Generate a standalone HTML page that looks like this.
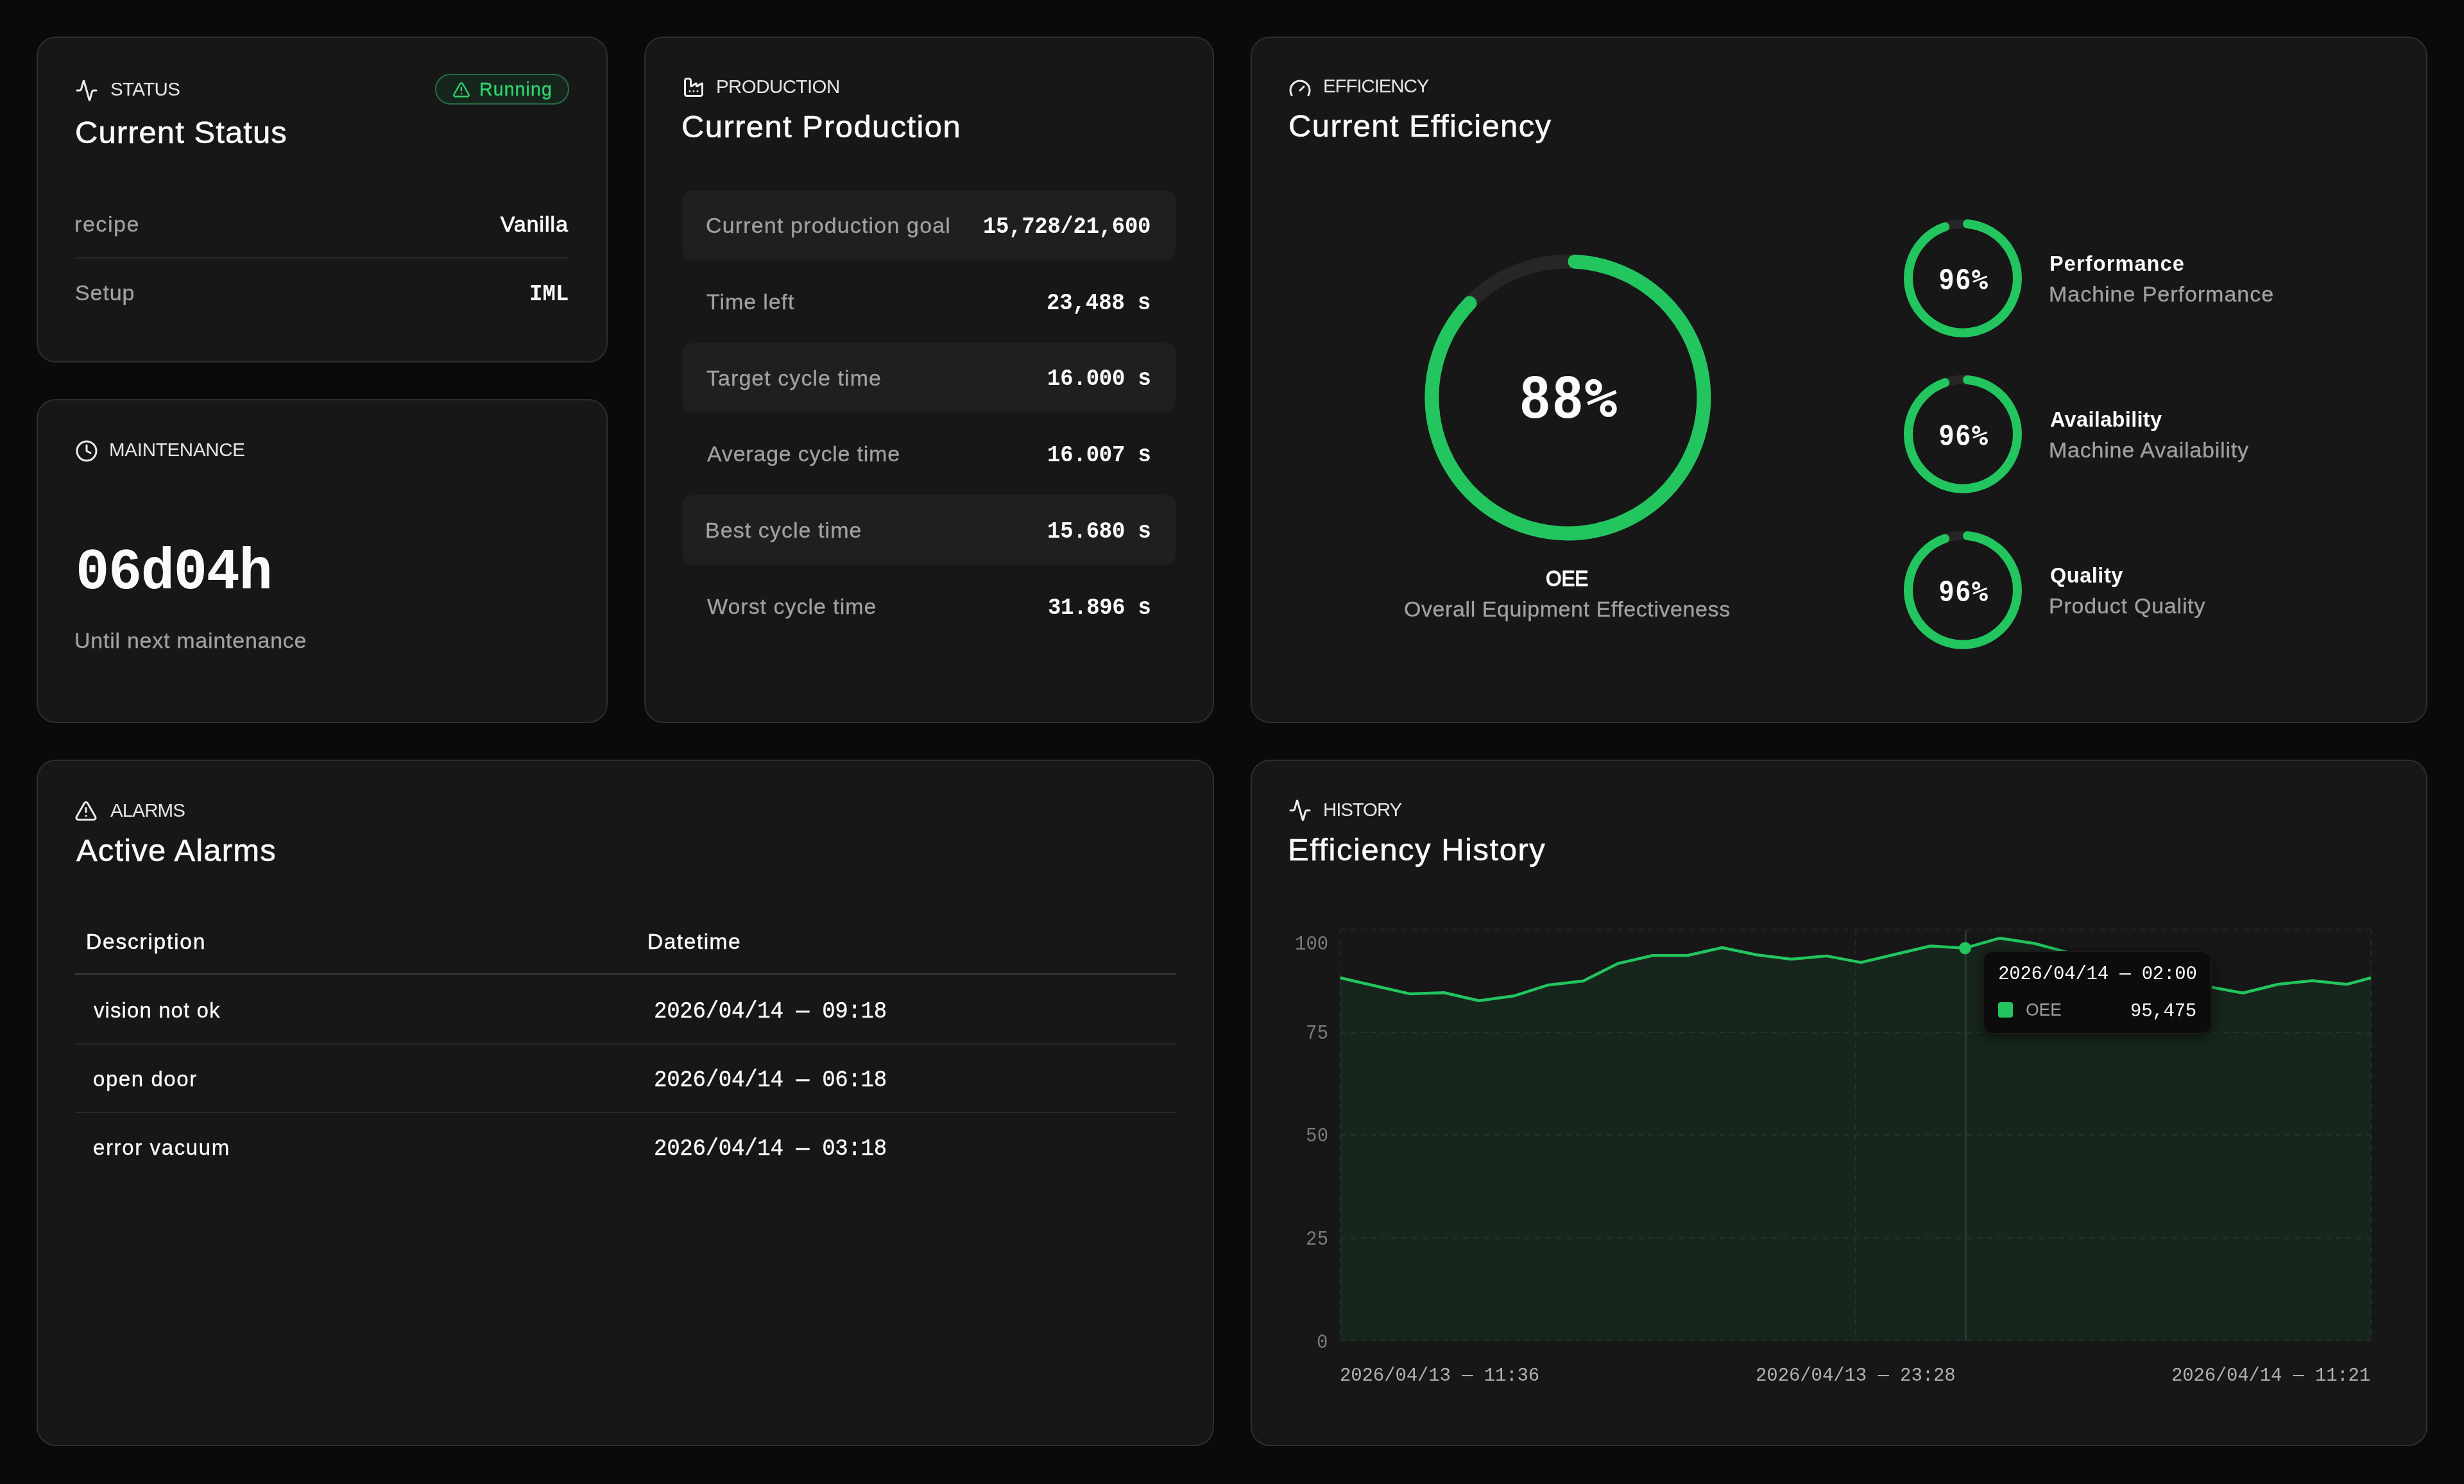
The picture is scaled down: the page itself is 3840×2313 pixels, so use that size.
<!DOCTYPE html><html><head><meta charset="utf-8"><title>Dashboard</title><style>
html,body{margin:0;padding:0;}body{width:3840px;height:2313px;background:#0a0a0a;position:relative;overflow:hidden;font-family:"Liberation Sans",sans-serif;}
.card{position:absolute;box-sizing:border-box;background:#171717;border:2px solid #2e2e2e;border-radius:30px;}
.t{position:absolute;white-space:nowrap;will-change:transform;}.ic{position:absolute;}.full{position:absolute;left:0;top:0;}
.rowbg{position:absolute;background:#1f1f1f;border-radius:14px;}.hr{position:absolute;}
@media (max-width:2600px){html{zoom:0.5;}}
</style></head><body>
<div class="card" style="left:57px;top:57px;width:890px;height:508px"></div>
<div class="card" style="left:57px;top:622px;width:890px;height:505px"></div>
<div class="card" style="left:1004px;top:57px;width:888px;height:1070px"></div>
<div class="card" style="left:1949px;top:57px;width:1834px;height:1070px"></div>
<div class="card" style="left:57px;top:1184px;width:1835px;height:1070px"></div>
<div class="card" style="left:1949px;top:1184px;width:1834px;height:1070px"></div>
<div class="hr" style="left:117px;top:401px;width:770px;height:2px;background:#292929"></div>
<div style="position:absolute;left:678px;top:115px;width:209px;height:48px;box-sizing:border-box;border:2px solid rgb(40,108,70);background:rgba(34,197,94,0.09);border-radius:24px"></div>
<svg class="ic" style="left:704.5px;top:125.5px" width="28" height="28" viewBox="0 0 24 24" fill="none" stroke="#2fd56f" stroke-width="2" stroke-linecap="round" stroke-linejoin="round"><path d="m21.73 18-8-14a2 2 0 0 0-3.48 0l-8 14A2 2 0 0 0 4 21h16a2 2 0 0 0 1.73-3"/><path d="M12 9v4"/><path d="M12 17h.01"/></svg>
<div class="rowbg" style="left:1064px;top:297.00px;width:768px;height:108.5px"></div>
<div class="rowbg" style="left:1064px;top:534.50px;width:768px;height:108.5px"></div>
<div class="rowbg" style="left:1064px;top:772.00px;width:768px;height:108.5px"></div>
<div class="hr" style="left:117px;top:1517px;width:1715px;height:3px;background:#353535"></div>
<div class="hr" style="left:117px;top:1626px;width:1715px;height:2px;background:#292929"></div>
<div class="hr" style="left:117px;top:1733px;width:1715px;height:2px;background:#292929"></div>
<svg class="ic" style="left:116.6px;top:122.5px" width="36" height="36" viewBox="0 0 24 24" fill="none" stroke="#ebebeb" stroke-width="2" stroke-linecap="round" stroke-linejoin="round"><path d="M22 12h-2.48a2 2 0 0 0-1.93 1.46l-2.35 8.36a.25.25 0 0 1-.48 0L9.24 2.18a.25.25 0 0 0-.48 0l-2.35 8.36A2 2 0 0 1 4.49 12H2"/></svg>
<svg class="ic" style="left:116.5px;top:684.5px" width="36" height="36" viewBox="0 0 24 24" fill="none" stroke="#ebebeb" stroke-width="2" stroke-linecap="round" stroke-linejoin="round"><circle cx="12" cy="12" r="10"/><polyline points="12 6 12 12 16 14"/></svg>
<svg class="ic" style="left:1063px;top:118px" width="36" height="36" viewBox="0 0 24 24" fill="none" stroke="#ebebeb" stroke-width="2" stroke-linecap="round" stroke-linejoin="round"><path d="M12 16h.01"/><path d="M16 16h.01"/><path d="M3 19a2 2 0 0 0 2 2h14a2 2 0 0 0 2-2V8.5a.5.5 0 0 0-.769-.422l-4.462 2.844A.5.5 0 0 1 15 10.5v-2a.5.5 0 0 0-.769-.422L9.77 10.922A.5.5 0 0 1 9 10.5V5a2 2 0 0 0-2-2H5a2 2 0 0 0-2 2z"/><path d="M8 16h.01"/></svg>
<svg class="ic" style="left:2007.7px;top:119.5px" width="36" height="36" viewBox="0 0 24 24" fill="none" stroke="#ebebeb" stroke-width="2" stroke-linecap="round" stroke-linejoin="round"><path d="m12 14 4-4"/><path d="M3.34 19a10 10 0 1 1 17.32 0"/></svg>
<svg class="ic" style="left:116.1px;top:1245.5px" width="36" height="36" viewBox="0 0 24 24" fill="none" stroke="#ebebeb" stroke-width="2" stroke-linecap="round" stroke-linejoin="round"><path d="m21.73 18-8-14a2 2 0 0 0-3.48 0l-8 14A2 2 0 0 0 4 21h16a2 2 0 0 0 1.73-3"/><path d="M12 9v4"/><path d="M12 17h.01"/></svg>
<svg class="ic" style="left:2007.8px;top:1245.3px" width="36" height="36" viewBox="0 0 24 24" fill="none" stroke="#ebebeb" stroke-width="2" stroke-linecap="round" stroke-linejoin="round"><path d="M22 12h-2.48a2 2 0 0 0-1.93 1.46l-2.35 8.36a.25.25 0 0 1-.48 0L9.24 2.18a.25.25 0 0 0-.48 0l-2.35 8.36A2 2 0 0 1 4.49 12H2"/></svg>
<svg class="full" width="3840" height="2313" viewBox="0 0 3840 2313"><circle cx="2443.4" cy="619.4" r="212" fill="none" stroke="#262626" stroke-width="22"/><path d="M2454.40 407.69 A212 212 0 1 1 2290.45 472.60" fill="none" stroke="#22c55e" stroke-width="22" stroke-linecap="round"/><circle cx="2483.6" cy="603.8" r="9.3" fill="none" stroke="#fafafa" stroke-width="7.6"/><circle cx="2506.6" cy="637.0" r="9.3" fill="none" stroke="#fafafa" stroke-width="7.6"/><line x1="2474.2" y1="629.0" x2="2518.6" y2="610.6" stroke="#fafafa" stroke-width="5.6"/><circle cx="3059" cy="433.7" r="85" fill="none" stroke="#262626" stroke-width="14"/><path d="M3066.00 348.99 A85 85 0 1 1 3031.15 353.39" fill="none" stroke="#22c55e" stroke-width="14" stroke-linecap="round"/><circle cx="3079.7" cy="426.9" r="4.6" fill="none" stroke="#fafafa" stroke-width="3.9"/><circle cx="3091.4" cy="444.3" r="4.6" fill="none" stroke="#fafafa" stroke-width="3.9"/><line x1="3074.8" y1="439.3" x2="3096.6" y2="430.9" stroke="#fafafa" stroke-width="2.8"/><circle cx="3059" cy="676.7" r="85" fill="none" stroke="#262626" stroke-width="14"/><path d="M3066.00 591.99 A85 85 0 1 1 3031.15 596.39" fill="none" stroke="#22c55e" stroke-width="14" stroke-linecap="round"/><circle cx="3079.7" cy="669.9" r="4.6" fill="none" stroke="#fafafa" stroke-width="3.9"/><circle cx="3091.4" cy="687.3" r="4.6" fill="none" stroke="#fafafa" stroke-width="3.9"/><line x1="3074.8" y1="682.3" x2="3096.6" y2="673.9" stroke="#fafafa" stroke-width="2.8"/><circle cx="3059" cy="919.7" r="85" fill="none" stroke="#262626" stroke-width="14"/><path d="M3066.00 834.99 A85 85 0 1 1 3031.15 839.39" fill="none" stroke="#22c55e" stroke-width="14" stroke-linecap="round"/><circle cx="3079.7" cy="912.9" r="4.6" fill="none" stroke="#fafafa" stroke-width="3.9"/><circle cx="3091.4" cy="930.3" r="4.6" fill="none" stroke="#fafafa" stroke-width="3.9"/><line x1="3074.8" y1="925.3" x2="3096.6" y2="916.9" stroke="#fafafa" stroke-width="2.8"/></svg>
<svg class="full" width="3840" height="2313" viewBox="0 0 3840 2313"><line x1="2088.5" y1="1448.7" x2="3695" y2="1448.7" stroke="#262626" stroke-width="2" stroke-dasharray="8 8"/><line x1="2088.5" y1="1608.9" x2="3695" y2="1608.9" stroke="#262626" stroke-width="2" stroke-dasharray="8 8"/><line x1="2088.5" y1="1769.2" x2="3695" y2="1769.2" stroke="#262626" stroke-width="2" stroke-dasharray="8 8"/><line x1="2088.5" y1="1929.4" x2="3695" y2="1929.4" stroke="#262626" stroke-width="2" stroke-dasharray="8 8"/><line x1="2088.5" y1="2089.7" x2="3695" y2="2089.7" stroke="#262626" stroke-width="2" stroke-dasharray="8 8"/><line x1="2088.5" y1="1448.7" x2="2088.5" y2="2089.7" stroke="#262626" stroke-width="2" stroke-dasharray="8 8"/><line x1="2891.75" y1="1448.7" x2="2891.75" y2="2089.7" stroke="#262626" stroke-width="2" stroke-dasharray="8 8"/><line x1="3695" y1="1448.7" x2="3695" y2="2089.7" stroke="#262626" stroke-width="2" stroke-dasharray="8 8"/><path d="M2088.5,2089.7 L2088.5,1524.0 L2142.6,1536.5 L2196.7,1548.9 L2250.8,1547.2 L2304.9,1559.8 L2359.1,1552.3 L2413.2,1535.2 L2467.3,1529.0 L2521.4,1501.8 L2575.5,1489.2 L2629.6,1489.2 L2683.7,1477.0 L2737.8,1488.2 L2791.9,1495.0 L2846.0,1489.9 L2900.2,1500.1 L2954.3,1487.3 L3008.4,1474.5 L3062.5,1477.7 L3116.6,1462.2 L3170.7,1470.5 L3224.8,1485.2 L3278.9,1506.4 L3333.0,1519.2 L3387.1,1528.8 L3441.2,1537.8 L3495.4,1547.8 L3549.5,1534.2 L3603.6,1528.4 L3657.7,1534.2 L3695.0,1524.0 L3695,2089.7 Z" fill="#22c55e" fill-opacity="0.09"/><line x1="3063.5" y1="1448.7" x2="3063.5" y2="2089.7" stroke="#3f3f3f" stroke-width="2"/><polyline points="2088.5,1524.0 2142.6,1536.5 2196.7,1548.9 2250.8,1547.2 2304.9,1559.8 2359.1,1552.3 2413.2,1535.2 2467.3,1529.0 2521.4,1501.8 2575.5,1489.2 2629.6,1489.2 2683.7,1477.0 2737.8,1488.2 2791.9,1495.0 2846.0,1489.9 2900.2,1500.1 2954.3,1487.3 3008.4,1474.5 3062.5,1477.7 3116.6,1462.2 3170.7,1470.5 3224.8,1485.2 3278.9,1506.4 3333.0,1519.2 3387.1,1528.8 3441.2,1537.8 3495.4,1547.8 3549.5,1534.2 3603.6,1528.4 3657.7,1534.2 3695.0,1524.0" fill="none" stroke="#22c55e" stroke-width="4.5" stroke-linejoin="round"/><circle cx="3062.5" cy="1477.7" r="9.5" fill="#22c55e"/></svg>
<div style="position:absolute;left:3089.5px;top:1481.5px;width:357px;height:130px;box-sizing:border-box;background:#0c0c0c;border:2px solid #1a1a1a;border-radius:16px;z-index:4;box-shadow:0 6px 20px rgba(0,0,0,0.55)"></div>
<div style="position:absolute;left:3113.7px;top:1562px;width:23.6px;height:23.5px;background:#22c55e;border-radius:4px;z-index:5"></div>
<div class="t" style="left:171.68px;top:124.23px;font-family:'Liberation Sans',sans-serif;font-weight:400;font-size:29.50px;line-height:29.50px;letter-spacing:-0.607px;color:#e5e5e5;">STATUS</div>
<div class="t" style="left:116.70px;top:181.92px;font-family:'Liberation Sans',sans-serif;font-weight:400;font-size:49.00px;line-height:49.00px;letter-spacing:1.070px;color:#fafafa;-webkit-text-stroke:0.6px #fafafa;">Current Status</div>
<div class="t" style="left:746.77px;top:124.79px;font-family:'Liberation Sans',sans-serif;font-weight:400;font-size:28.60px;line-height:28.60px;letter-spacing:1.053px;color:#2fd56f;-webkit-text-stroke:0.4px #2fd56f;">Running</div>
<div class="t" style="left:116.17px;top:332.22px;font-family:'Liberation Sans',sans-serif;font-weight:400;font-size:34.00px;line-height:34.00px;letter-spacing:1.560px;color:#a1a1a1;-webkit-text-stroke:0.3px #a1a1a1;">recipe</div>
<div class="t" style="left:780.00px;top:332.64px;font-family:'Liberation Sans',sans-serif;font-weight:400;font-size:33.50px;line-height:33.50px;letter-spacing:1.118px;color:#fafafa;-webkit-text-stroke:0.9px #fafafa;">Vanilla</div>
<div class="t" style="left:116.94px;top:439.22px;font-family:'Liberation Sans',sans-serif;font-weight:400;font-size:34.00px;line-height:34.00px;letter-spacing:0.897px;color:#a1a1a1;-webkit-text-stroke:0.3px #a1a1a1;">Setup</div>
<div class="t" style="left:824.88px;top:441.94px;font-family:'Liberation Mono',monospace;font-weight:700;font-size:34.00px;line-height:34.00px;letter-spacing:0.097px;color:#fafafa;transform:scaleY(1.0700);transform-origin:0 26.06px;">IML</div>
<div class="t" style="left:170.20px;top:686.03px;font-family:'Liberation Sans',sans-serif;font-weight:400;font-size:29.50px;line-height:29.50px;letter-spacing:-0.267px;color:#e5e5e5;">MAINTENANCE</div>
<div class="t" style="left:117.91px;top:850.20px;font-family:'Liberation Mono',monospace;font-weight:700;font-size:87.15px;line-height:87.15px;letter-spacing:-1.413px;color:#fafafa;transform:scaleY(1.0400);transform-origin:0 66.80px;">06d04h</div>
<div class="t" style="left:115.88px;top:980.72px;font-family:'Liberation Sans',sans-serif;font-weight:400;font-size:34.00px;line-height:34.00px;letter-spacing:0.745px;color:#a1a1a1;-webkit-text-stroke:0.3px #a1a1a1;">Until next maintenance</div>
<div class="t" style="left:1115.70px;top:120.03px;font-family:'Liberation Sans',sans-serif;font-weight:400;font-size:29.50px;line-height:29.50px;letter-spacing:-0.555px;color:#e5e5e5;">PRODUCTION</div>
<div class="t" style="left:1061.70px;top:172.82px;font-family:'Liberation Sans',sans-serif;font-weight:400;font-size:49.00px;line-height:49.00px;letter-spacing:1.376px;color:#fafafa;-webkit-text-stroke:0.6px #fafafa;">Current Production</div>
<div class="t" style="left:1100.41px;top:334.12px;font-family:'Liberation Sans',sans-serif;font-weight:400;font-size:34.00px;line-height:34.00px;letter-spacing:1.160px;color:#a1a1a1;-webkit-text-stroke:0.3px #a1a1a1;">Current production goal</div>
<div class="t" style="left:1532.38px;top:336.84px;font-family:'Liberation Mono',monospace;font-weight:700;font-size:34.00px;line-height:34.00px;letter-spacing:-0.317px;color:#fafafa;transform:scaleY(1.0700);transform-origin:0 26.06px;">15,728/21,600</div>
<div class="t" style="left:1101.47px;top:452.87px;font-family:'Liberation Sans',sans-serif;font-weight:400;font-size:34.00px;line-height:34.00px;letter-spacing:0.915px;color:#a1a1a1;-webkit-text-stroke:0.3px #a1a1a1;">Time left</div>
<div class="t" style="left:1631.41px;top:455.59px;font-family:'Liberation Mono',monospace;font-weight:700;font-size:34.00px;line-height:34.00px;letter-spacing:-0.118px;color:#fafafa;transform:scaleY(1.0700);transform-origin:0 26.06px;">23,488 s</div>
<div class="t" style="left:1101.47px;top:571.62px;font-family:'Liberation Sans',sans-serif;font-weight:400;font-size:34.00px;line-height:34.00px;letter-spacing:1.052px;color:#a1a1a1;-webkit-text-stroke:0.3px #a1a1a1;">Target cycle time</div>
<div class="t" style="left:1631.88px;top:574.34px;font-family:'Liberation Mono',monospace;font-weight:700;font-size:34.00px;line-height:34.00px;letter-spacing:-0.185px;color:#fafafa;transform:scaleY(1.0700);transform-origin:0 26.06px;">16.000 s</div>
<div class="t" style="left:1102.00px;top:690.37px;font-family:'Liberation Sans',sans-serif;font-weight:400;font-size:34.00px;line-height:34.00px;letter-spacing:0.792px;color:#a1a1a1;-webkit-text-stroke:0.3px #a1a1a1;">Average cycle time</div>
<div class="t" style="left:1631.88px;top:693.09px;font-family:'Liberation Mono',monospace;font-weight:700;font-size:34.00px;line-height:34.00px;letter-spacing:-0.185px;color:#fafafa;transform:scaleY(1.0700);transform-origin:0 26.06px;">16.007 s</div>
<div class="t" style="left:1099.34px;top:809.12px;font-family:'Liberation Sans',sans-serif;font-weight:400;font-size:34.00px;line-height:34.00px;letter-spacing:1.058px;color:#a1a1a1;-webkit-text-stroke:0.3px #a1a1a1;">Best cycle time</div>
<div class="t" style="left:1631.88px;top:811.84px;font-family:'Liberation Mono',monospace;font-weight:700;font-size:34.00px;line-height:34.00px;letter-spacing:-0.185px;color:#fafafa;transform:scaleY(1.0700);transform-origin:0 26.06px;">15.680 s</div>
<div class="t" style="left:1102.00px;top:927.87px;font-family:'Liberation Sans',sans-serif;font-weight:400;font-size:34.00px;line-height:34.00px;letter-spacing:0.976px;color:#a1a1a1;-webkit-text-stroke:0.3px #a1a1a1;">Worst cycle time</div>
<div class="t" style="left:1632.94px;top:930.59px;font-family:'Liberation Mono',monospace;font-weight:700;font-size:34.00px;line-height:34.00px;letter-spacing:-0.336px;color:#fafafa;transform:scaleY(1.0700);transform-origin:0 26.06px;">31.896 s</div>
<div class="t" style="left:2062.40px;top:119.23px;font-family:'Liberation Sans',sans-serif;font-weight:400;font-size:29.50px;line-height:29.50px;letter-spacing:-1.106px;color:#e5e5e5;">EFFICIENCY</div>
<div class="t" style="left:2007.90px;top:171.82px;font-family:'Liberation Sans',sans-serif;font-weight:400;font-size:49.00px;line-height:49.00px;letter-spacing:1.370px;color:#fafafa;-webkit-text-stroke:0.6px #fafafa;">Current Efficiency</div>
<div class="t" style="left:2368.52px;top:573.37px;font-family:'Liberation Sans',sans-serif;font-weight:700;font-size:92.30px;line-height:92.30px;letter-spacing:0.000px;color:#fafafa;transform:scaleX(0.8884);transform-origin:2.88px 50%;">8</div>
<div class="t" style="left:2419.92px;top:573.37px;font-family:'Liberation Sans',sans-serif;font-weight:700;font-size:92.30px;line-height:92.30px;letter-spacing:0.000px;color:#fafafa;transform:scaleX(0.8884);transform-origin:2.88px 50%;">8</div>
<div class="t" style="left:2408.61px;top:883.82px;font-family:'Liberation Sans',sans-serif;font-weight:400;font-size:34.00px;line-height:34.00px;letter-spacing:0.000px;color:#fafafa;-webkit-text-stroke:1.4px #fafafa;transform:scaleX(0.9218);transform-origin:1.59px 50%;">OEE</div>
<div class="t" style="left:2188.11px;top:931.52px;font-family:'Liberation Sans',sans-serif;font-weight:400;font-size:34.00px;line-height:34.00px;letter-spacing:0.581px;color:#a1a1a1;-webkit-text-stroke:0.3px #a1a1a1;">Overall Equipment Effectiveness</div>
<div class="t" style="left:3021.96px;top:411.99px;font-family:'Liberation Sans',sans-serif;font-weight:700;font-size:46.08px;line-height:46.08px;letter-spacing:0.000px;color:#fafafa;transform:scaleX(0.8811);transform-origin:1.44px 50%;">9</div>
<div class="t" style="left:3048.16px;top:411.99px;font-family:'Liberation Sans',sans-serif;font-weight:700;font-size:46.08px;line-height:46.08px;letter-spacing:0.000px;color:#fafafa;transform:scaleX(0.8724);transform-origin:1.44px 50%;">6</div>
<div class="t" style="left:3193.97px;top:395.49px;font-family:'Liberation Sans',sans-serif;font-weight:700;font-size:32.50px;line-height:32.50px;letter-spacing:1.114px;color:#fafafa;">Performance</div>
<div class="t" style="left:3193.34px;top:441.02px;font-family:'Liberation Sans',sans-serif;font-weight:400;font-size:34.00px;line-height:34.00px;letter-spacing:0.969px;color:#a1a1a1;-webkit-text-stroke:0.3px #a1a1a1;">Machine Performance</div>
<div class="t" style="left:3021.96px;top:654.99px;font-family:'Liberation Sans',sans-serif;font-weight:700;font-size:46.08px;line-height:46.08px;letter-spacing:0.000px;color:#fafafa;transform:scaleX(0.8811);transform-origin:1.44px 50%;">9</div>
<div class="t" style="left:3048.16px;top:654.99px;font-family:'Liberation Sans',sans-serif;font-weight:700;font-size:46.08px;line-height:46.08px;letter-spacing:0.000px;color:#fafafa;transform:scaleX(0.8724);transform-origin:1.44px 50%;">6</div>
<div class="t" style="left:3195.49px;top:638.49px;font-family:'Liberation Sans',sans-serif;font-weight:700;font-size:32.50px;line-height:32.50px;letter-spacing:0.338px;color:#fafafa;">Availability</div>
<div class="t" style="left:3193.34px;top:684.02px;font-family:'Liberation Sans',sans-serif;font-weight:400;font-size:34.00px;line-height:34.00px;letter-spacing:0.784px;color:#a1a1a1;-webkit-text-stroke:0.3px #a1a1a1;">Machine Availability</div>
<div class="t" style="left:3021.96px;top:897.99px;font-family:'Liberation Sans',sans-serif;font-weight:700;font-size:46.08px;line-height:46.08px;letter-spacing:0.000px;color:#fafafa;transform:scaleX(0.8811);transform-origin:1.44px 50%;">9</div>
<div class="t" style="left:3048.16px;top:897.99px;font-family:'Liberation Sans',sans-serif;font-weight:700;font-size:46.08px;line-height:46.08px;letter-spacing:0.000px;color:#fafafa;transform:scaleX(0.8724);transform-origin:1.44px 50%;">6</div>
<div class="t" style="left:3194.98px;top:881.49px;font-family:'Liberation Sans',sans-serif;font-weight:700;font-size:32.50px;line-height:32.50px;letter-spacing:0.524px;color:#fafafa;">Quality</div>
<div class="t" style="left:3193.34px;top:927.02px;font-family:'Liberation Sans',sans-serif;font-weight:400;font-size:34.00px;line-height:34.00px;letter-spacing:0.787px;color:#a1a1a1;-webkit-text-stroke:0.3px #a1a1a1;">Product Quality</div>
<div class="t" style="left:172.30px;top:1248.03px;font-family:'Liberation Sans',sans-serif;font-weight:400;font-size:29.50px;line-height:29.50px;letter-spacing:-0.875px;color:#e5e5e5;">ALARMS</div>
<div class="t" style="left:118.50px;top:1300.52px;font-family:'Liberation Sans',sans-serif;font-weight:400;font-size:49.00px;line-height:49.00px;letter-spacing:1.161px;color:#fafafa;-webkit-text-stroke:0.6px #fafafa;">Active Alarms</div>
<div class="t" style="left:133.78px;top:1450.94px;font-family:'Liberation Sans',sans-serif;font-weight:400;font-size:33.50px;line-height:33.50px;letter-spacing:1.783px;color:#fafafa;-webkit-text-stroke:0.5px #fafafa;">Description</div>
<div class="t" style="left:1009.08px;top:1451.44px;font-family:'Liberation Sans',sans-serif;font-weight:400;font-size:33.50px;line-height:33.50px;letter-spacing:1.518px;color:#fafafa;-webkit-text-stroke:0.5px #fafafa;">Datetime</div>
<div class="t" style="left:146.00px;top:1558.27px;font-family:'Liberation Sans',sans-serif;font-weight:400;font-size:33.00px;line-height:33.00px;letter-spacing:1.088px;color:#fafafa;-webkit-text-stroke:0.3px #fafafa;">vision not ok</div>
<div class="t" style="left:1019.16px;top:1560.40px;font-family:'Liberation Mono',monospace;font-weight:400;font-size:34.18px;line-height:34.18px;letter-spacing:-0.343px;color:#fafafa;-webkit-text-stroke:0.3px #fafafa;transform:scaleY(1.0600);transform-origin:0 26.20px;">2026/04/14 — 09:18</div>
<div class="t" style="left:144.97px;top:1665.27px;font-family:'Liberation Sans',sans-serif;font-weight:400;font-size:33.00px;line-height:33.00px;letter-spacing:1.570px;color:#fafafa;-webkit-text-stroke:0.3px #fafafa;">open door</div>
<div class="t" style="left:1019.16px;top:1667.40px;font-family:'Liberation Mono',monospace;font-weight:400;font-size:34.18px;line-height:34.18px;letter-spacing:-0.343px;color:#fafafa;-webkit-text-stroke:0.3px #fafafa;transform:scaleY(1.0600);transform-origin:0 26.20px;">2026/04/14 — 06:18</div>
<div class="t" style="left:144.97px;top:1772.27px;font-family:'Liberation Sans',sans-serif;font-weight:400;font-size:33.00px;line-height:33.00px;letter-spacing:1.623px;color:#fafafa;-webkit-text-stroke:0.3px #fafafa;">error vacuum</div>
<div class="t" style="left:1019.16px;top:1774.40px;font-family:'Liberation Mono',monospace;font-weight:400;font-size:34.18px;line-height:34.18px;letter-spacing:-0.343px;color:#fafafa;-webkit-text-stroke:0.3px #fafafa;transform:scaleY(1.0600);transform-origin:0 26.20px;">2026/04/14 — 03:18</div>
<div class="t" style="left:2061.70px;top:1247.43px;font-family:'Liberation Sans',sans-serif;font-weight:400;font-size:29.50px;line-height:29.50px;letter-spacing:-1.139px;color:#e5e5e5;">HISTORY</div>
<div class="t" style="left:2006.57px;top:1300.32px;font-family:'Liberation Sans',sans-serif;font-weight:400;font-size:49.00px;line-height:49.00px;letter-spacing:1.527px;color:#fafafa;-webkit-text-stroke:0.6px #fafafa;">Efficiency History</div>
<div class="t" style="left:2017.69px;top:1458.37px;font-family:'Liberation Mono',monospace;font-weight:400;font-size:29.00px;line-height:29.00px;letter-spacing:0.024px;color:#7a7a7a;transform:scaleY(1.0500);transform-origin:0 22.23px;">100</div>
<div class="t" style="left:2034.89px;top:1597.17px;font-family:'Liberation Mono',monospace;font-weight:400;font-size:29.00px;line-height:29.00px;letter-spacing:0.250px;color:#7a7a7a;transform:scaleY(1.0500);transform-origin:0 22.23px;">75</div>
<div class="t" style="left:2034.89px;top:1757.17px;font-family:'Liberation Mono',monospace;font-weight:400;font-size:29.00px;line-height:29.00px;letter-spacing:0.250px;color:#7a7a7a;transform:scaleY(1.0500);transform-origin:0 22.23px;">50</div>
<div class="t" style="left:2034.89px;top:1918.47px;font-family:'Liberation Mono',monospace;font-weight:400;font-size:29.00px;line-height:29.00px;letter-spacing:0.250px;color:#7a7a7a;transform:scaleY(1.0500);transform-origin:0 22.23px;">25</div>
<div class="t" style="left:2051.64px;top:2079.37px;font-family:'Liberation Mono',monospace;font-weight:400;font-size:29.00px;line-height:29.00px;letter-spacing:0.000px;color:#7a7a7a;transform:scaleY(1.0500);transform-origin:0 22.23px;">0</div>
<div class="t" style="left:2087.69px;top:2130.47px;font-family:'Liberation Mono',monospace;font-weight:400;font-size:29.00px;line-height:29.00px;letter-spacing:-0.117px;color:#b0b0b0;transform:scaleY(1.0450);transform-origin:0 22.23px;">2026/04/13 — 11:36</div>
<div class="t" style="left:2735.79px;top:2130.47px;font-family:'Liberation Mono',monospace;font-weight:400;font-size:29.00px;line-height:29.00px;letter-spacing:-0.088px;color:#b0b0b0;transform:scaleY(1.0450);transform-origin:0 22.23px;">2026/04/13 — 23:28</div>
<div class="t" style="left:3383.89px;top:2130.47px;font-family:'Liberation Mono',monospace;font-weight:400;font-size:29.00px;line-height:29.00px;letter-spacing:-0.179px;color:#b0b0b0;transform:scaleY(1.0450);transform-origin:0 22.23px;">2026/04/14 — 11:21</div>
<div class="t" style="left:3113.69px;top:1504.27px;font-family:'Liberation Mono',monospace;font-weight:400;font-size:29.00px;line-height:29.00px;letter-spacing:-0.200px;color:#fafafa;z-index:5;transform:scaleY(1.0450);transform-origin:0 22.23px;">2026/04/14 — 02:00</div>
<div class="t" style="left:3156.69px;top:1560.00px;font-family:'Liberation Sans',sans-serif;font-weight:400;font-size:28.00px;line-height:28.00px;letter-spacing:0.000px;color:#a1a1a1;z-index:5;transform:scaleX(0.9410);transform-origin:1.31px 50%;">OEE</div>
<div class="t" style="left:3319.69px;top:1561.77px;font-family:'Liberation Mono',monospace;font-weight:400;font-size:29.00px;line-height:29.00px;letter-spacing:-0.232px;color:#fafafa;z-index:5;transform:scaleY(1.0450);transform-origin:0 22.23px;">95,475</div>
</body></html>
